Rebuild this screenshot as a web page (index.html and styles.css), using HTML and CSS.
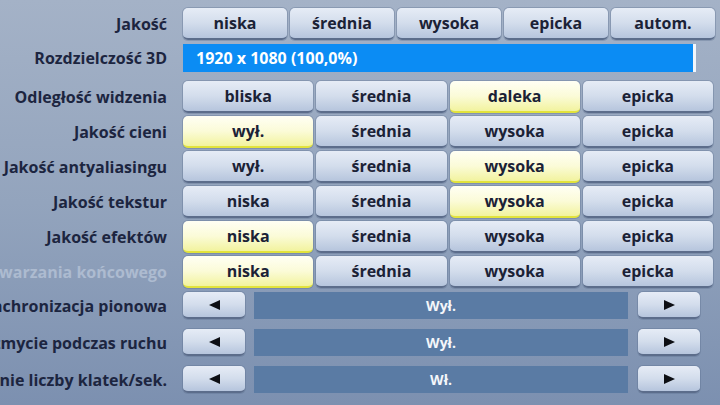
FILE: index.html
```html
<!DOCTYPE html>
<html lang="pl">
<head>
<meta charset="utf-8">
<link rel="stylesheet" href="styles.css">
</head>
<body>
<div class="panel">
  <div class="row r-top">
    <div class="label"><span>Jakość</span></div>
    <div class="opts five">
      <div class="btn">niska</div>
      <div class="btn">średnia</div>
      <div class="btn">wysoka</div>
      <div class="btn">epicka</div>
      <div class="btn">autom.</div>
    </div>
  </div>
  <div class="row r-res">
    <div class="label"><span>Rozdzielczość 3D</span></div>
    <div class="resbar">1920 x 1080 (100,0%)</div>
  </div>
  <div class="grid4">
    <div class="row r4">
      <div class="label"><span>Odległość widzenia</span></div>
      <div class="opts four">
        <div class="btn">bliska</div>
        <div class="btn">średnia</div>
        <div class="btn sel">daleka</div>
        <div class="btn">epicka</div>
      </div>
    </div>
    <div class="row r4">
      <div class="label"><span>Jakość cieni</span></div>
      <div class="opts four">
        <div class="btn sel">wył.</div>
        <div class="btn">średnia</div>
        <div class="btn">wysoka</div>
        <div class="btn">epicka</div>
      </div>
    </div>
    <div class="row r4">
      <div class="label"><span>Jakość antyaliasingu</span></div>
      <div class="opts four">
        <div class="btn">wył.</div>
        <div class="btn">średnia</div>
        <div class="btn sel">wysoka</div>
        <div class="btn">epicka</div>
      </div>
    </div>
    <div class="row r4">
      <div class="label"><span>Jakość tekstur</span></div>
      <div class="opts four">
        <div class="btn">niska</div>
        <div class="btn">średnia</div>
        <div class="btn sel">wysoka</div>
        <div class="btn">epicka</div>
      </div>
    </div>
    <div class="row r4">
      <div class="label"><span>Jakość efektów</span></div>
      <div class="opts four">
        <div class="btn sel">niska</div>
        <div class="btn">średnia</div>
        <div class="btn">wysoka</div>
        <div class="btn">epicka</div>
      </div>
    </div>
    <div class="row r4">
      <div class="label faded"><span>Jakość przetwarzania końcowego</span></div>
      <div class="opts four">
        <div class="btn sel">niska</div>
        <div class="btn">średnia</div>
        <div class="btn">wysoka</div>
        <div class="btn">epicka</div>
      </div>
    </div>
  </div>
  <div class="arrows">
    <div class="row ra">
      <div class="label"><span>Synchronizacja pionowa</span></div>
      <div class="stepper">
        <div class="btn arrow"><span class="tri left"></span></div>
        <div class="value">Wył.</div>
        <div class="btn arrow"><span class="tri right"></span></div>
      </div>
    </div>
    <div class="row ra">
      <div class="label"><span>Rozmycie podczas ruchu</span></div>
      <div class="stepper">
        <div class="btn arrow"><span class="tri left"></span></div>
        <div class="value">Wył.</div>
        <div class="btn arrow"><span class="tri right"></span></div>
      </div>
    </div>
    <div class="row ra">
      <div class="label"><span>Wyświetlanie liczby klatek/sek.</span></div>
      <div class="stepper">
        <div class="btn arrow"><span class="tri left"></span></div>
        <div class="value">Wł.</div>
        <div class="btn arrow"><span class="tri right"></span></div>
      </div>
    </div>
  </div>
</div>
</body>
</html>
```
FILE: styles.css
```css
html, body {
  margin: 0;
  padding: 0;
  width: 720px;
  height: 405px;
  overflow: hidden;
}
body {
  background: linear-gradient(180deg, #a4b2c7 0%, #93a4bd 50%, #7c90b0 100%);
  font-family: "Open Sans", "Noto Sans", "DejaVu Sans", sans-serif;
  font-weight: 700;
  color: #1b2238;
}
.panel {
  padding-top: 8px;
  display: flex;
  flex-direction: column;
}
.row {
  display: flex;
  align-items: stretch;
  gap: 16px;
}
.label {
  flex: none;
  width: 167px;
  min-width: 0;
  display: flex;
  justify-content: flex-end;
  align-items: center;
  white-space: nowrap;
  font-size: 16px;
  color: #1c2540;
}
.label span { flex: none; }
.label.faded {
  color: #adbbd0;
}
.opts {
  display: flex;
  gap: 3px;
}
.five { width: 532px; }
.four { width: 530px; }
.opts .btn { flex: 1 1 0; }
.r-top { height: 32px; }
.r-res { height: 28px; margin-top: 4px; }
.grid4 {
  margin-top: 9px;
  display: flex;
  flex-direction: column;
  gap: 3px;
}
.r4 { height: 32px; }
.btn {
  box-sizing: border-box;
  display: flex;
  align-items: center;
  justify-content: center;
  border-radius: 5px;
  background: linear-gradient(180deg, #e6ecf6 0%, #d3ddec 50%, #b6c5dd 100%);
  border-bottom: 2px solid #5c6d8b;
  box-shadow: 0 0 0 1px rgba(90, 108, 140, 0.35);
  font-size: 16px;
  color: #1b2236;
}
.btn.sel {
  background: linear-gradient(180deg, #fffff4 0%, #fbfbd8 50%, #f2f39e 100%);
  border-bottom: 2px solid #e2e33c;
}
.resbar {
  box-sizing: border-box;
  width: 513px;
  background: #0b8cf4;
  border-right: 3px solid #f2f6fb;
  color: #ffffff;
  font-size: 16px;
  display: flex;
  align-items: center;
  padding-left: 13px;
}
.arrows {
  margin-top: 4px;
  display: flex;
  flex-direction: column;
  gap: 10px;
}
.ra { height: 27px; }
.stepper {
  display: flex;
  gap: 9px;
}
.arrow {
  width: 62px;
  flex: none;
}
.value {
  width: 374px;
  flex: none;
  background: #5a7ba4;
  color: #f4f6fa;
  font-size: 14px;
  display: flex;
  align-items: center;
  justify-content: center;
  margin-right: 1px;
}
.tri {
  width: 0;
  height: 0;
  border-top: 5px solid transparent;
  border-bottom: 5px solid transparent;
}
.tri.left { border-right: 11px solid #0d0f14; }
.tri.right { border-left: 11px solid #0d0f14; }
```
